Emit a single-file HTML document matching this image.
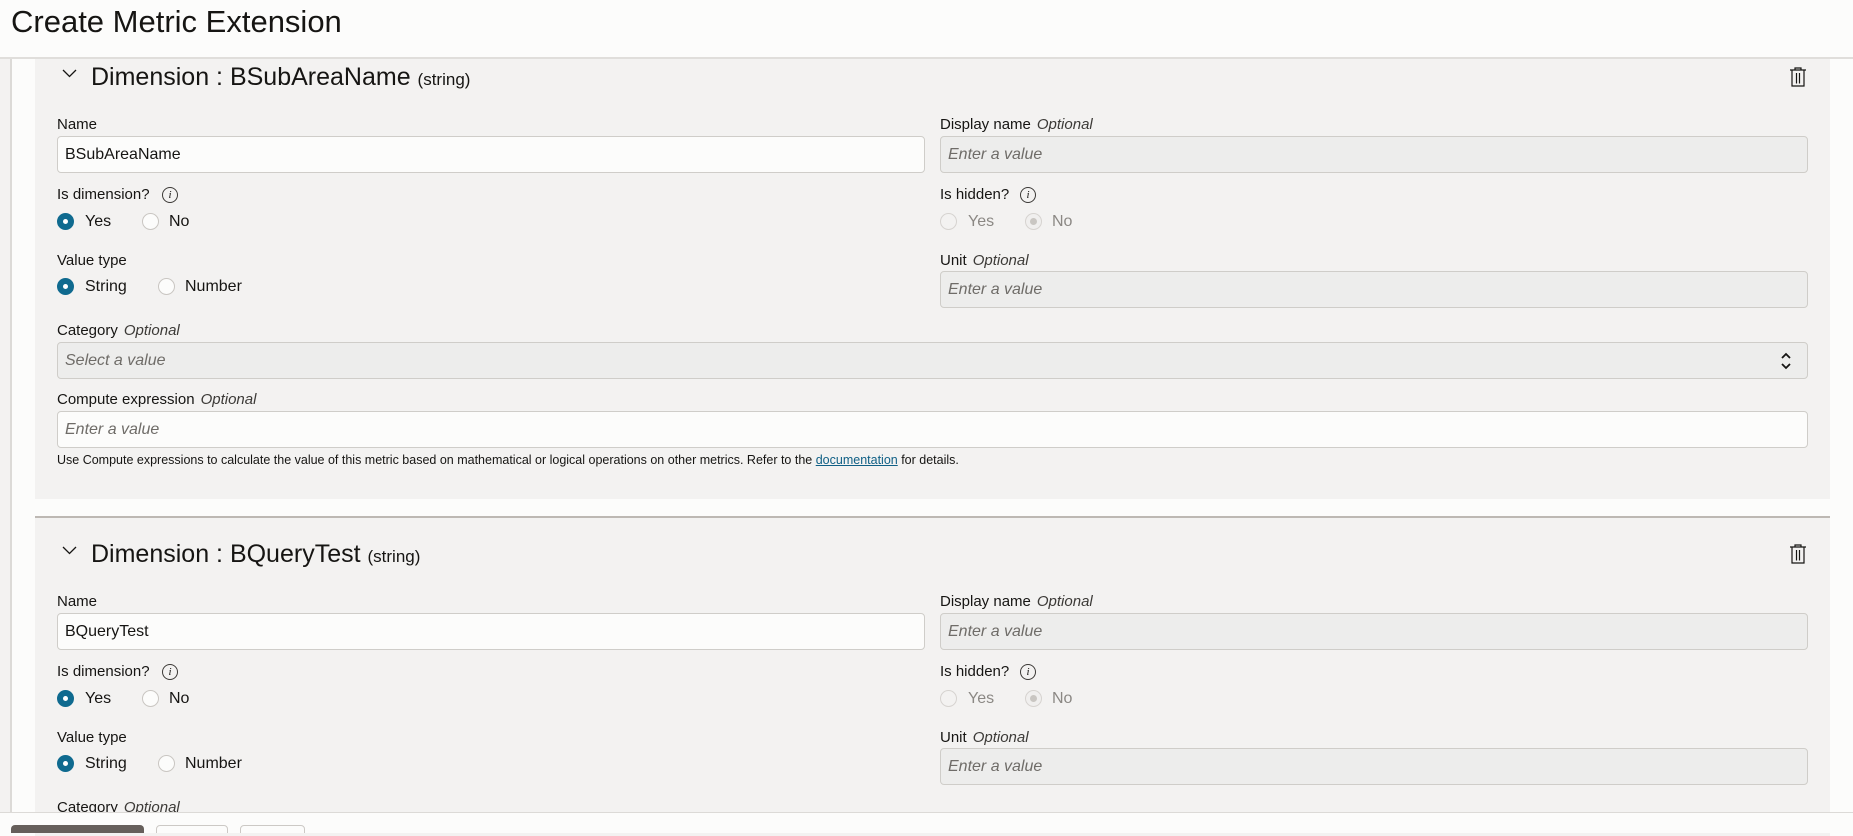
<!DOCTYPE html>
<html><head><meta charset="utf-8"><style>
*{box-sizing:border-box;margin:0;padding:0}
body{width:1853px;height:833px;overflow:hidden;background:#fcfcfb;font-family:"Liberation Sans",Arial,sans-serif;color:#161513;position:relative}
.abs{position:absolute}
#left{left:0;top:59px;width:12px;height:760px;background:#f3f2f1;border-right:2px solid #dcdad7}
.panel{position:absolute;left:35px;width:1795px;background:#f3f2f1}
.panel > *{position:absolute}
.lbl{font-size:15px;line-height:18px;white-space:nowrap}
.lbl i{color:#3c3a37;margin-left:6px}
.inp{height:37px;border:1px solid #cfcdc9;border-radius:4px;background:#fcfcfb;font-size:16px;line-height:35px;padding-left:7px;white-space:nowrap}
.dis{background:#ededec;color:#6f6c68}
.ph{font-style:italic;color:#6f6c68}
.r{width:17px;height:17px;border-radius:50%;border:1px solid #c9c6c2;background:#fcfcfb}
.r.on{background:#0f6a8f;border-color:#0f6a8f}
.r.on::after{content:"";position:absolute;left:5px;top:5px;width:5px;height:5px;border-radius:50%;background:#fff}
.r.de{background:#f3f2f1;border-color:#d6d3d0}
.r.dd{background:#f0efee;border-color:#d6d3d0}
.r.dd::after{content:"";position:absolute;left:4px;top:4px;width:7px;height:7px;border-radius:50%;background:#c9c6c2}
.rt{font-size:16px;line-height:18px}
.gray{color:#8b8884}
.info{width:16px;height:16px;border:1px solid #3c3a37;border-radius:50%;font:italic 11px/14px "Liberation Serif",serif;text-align:center}
.hdr{font-size:25px;line-height:30px;white-space:nowrap}
.hdr small{font-size:17px}
.help{font-size:12.5px;line-height:16px;color:#161513;white-space:nowrap}
.help u{color:#0f5f85}
</style></head><body>

<div class="abs" id="left"></div>

<div class="panel" style="top:39px;height:460px">
 <svg style="left:27px;top:30px" width="15" height="9" viewBox="0 0 15 9"><path d="M1 1l6.5 6.5L14 1" fill="none" stroke="#161513" stroke-width="1.3"/></svg>
 <div class="hdr" style="left:56px;top:23px">Dimension : BSubAreaName <small>(string)</small></div>
 <svg style="left:1754px;top:28px" width="18" height="20" viewBox="0 0 18 20"><path d="M6 2.5V1h6v1.5M1 3h16M3 3.5v15.5h12V3.5M7.5 6v10.5M10.5 6v10.5" fill="none" stroke="#161513" stroke-width="1.2"/></svg>
 <div class="lbl" style="left:22px;top:77px">Name</div>
 <div class="inp" style="left:22px;top:97px;width:868px">BSubAreaName</div>
 <div class="lbl" style="left:905px;top:77px">Display name<i>Optional</i></div>
 <div class="inp dis ph" style="left:905px;top:97px;width:868px">Enter a value</div>
 <div class="lbl" style="left:22px;top:147px">Is dimension?</div>
 <div class="info" style="left:127px;top:148px">i</div>
 <div class="r on" style="left:22px;top:174px"></div><div class="rt" style="left:50px;top:174px">Yes</div>
 <div class="r" style="left:107px;top:174px"></div><div class="rt" style="left:134px;top:174px">No</div>
 <div class="lbl" style="left:905px;top:147px">Is hidden?</div>
 <div class="info" style="left:985px;top:148px">i</div>
 <div class="r de" style="left:905px;top:174px"></div><div class="rt gray" style="left:933px;top:174px">Yes</div>
 <div class="r dd" style="left:990px;top:174px"></div><div class="rt gray" style="left:1017px;top:174px">No</div>
 <div class="lbl" style="left:22px;top:213px">Value type</div>
 <div class="r on" style="left:22px;top:239px"></div><div class="rt" style="left:50px;top:239px">String</div>
 <div class="r" style="left:123px;top:239px"></div><div class="rt" style="left:150px;top:239px">Number</div>
 <div class="lbl" style="left:905px;top:213px">Unit<i>Optional</i></div>
 <div class="inp dis ph" style="left:905px;top:232px;width:868px">Enter a value</div>
 <div class="lbl" style="left:22px;top:283px">Category<i>Optional</i></div>
 <div class="inp dis ph" style="left:22px;top:303px;width:1751px">Select a value</div>
 <svg style="left:1745px;top:313px" width="12" height="18" viewBox="0 0 12 18"><path d="M2 6l4-4 4 4M2 12l4 4 4-4" fill="none" stroke="#161513" stroke-width="1.8"/></svg>
 <div class="lbl" style="left:22px;top:352px">Compute expression<i>Optional</i></div>
 <div class="inp ph" style="left:22px;top:372px;width:1751px">Enter a value</div>
 <div class="help" style="left:22px;top:413px">Use Compute expressions to calculate the value of this metric based on mathematical or logical operations on other metrics. Refer to the <u>documentation</u> for details.</div>
</div>

<div class="panel" style="top:516px;height:320px;border-top:2px solid #bdb8b3">
 <svg style="left:27px;top:28px" width="15" height="9" viewBox="0 0 15 9"><path d="M1 1l6.5 6.5L14 1" fill="none" stroke="#161513" stroke-width="1.3"/></svg>
 <div class="hdr" style="left:56px;top:21px">Dimension : BQueryTest <small>(string)</small></div>
 <svg style="left:1754px;top:26px" width="18" height="20" viewBox="0 0 18 20"><path d="M6 2.5V1h6v1.5M1 3h16M3 3.5v15.5h12V3.5M7.5 6v10.5M10.5 6v10.5" fill="none" stroke="#161513" stroke-width="1.2"/></svg>
 <div class="lbl" style="left:22px;top:75px">Name</div>
 <div class="inp" style="left:22px;top:95px;width:868px">BQueryTest</div>
 <div class="lbl" style="left:905px;top:75px">Display name<i>Optional</i></div>
 <div class="inp dis ph" style="left:905px;top:95px;width:868px">Enter a value</div>
 <div class="lbl" style="left:22px;top:145px">Is dimension?</div>
 <div class="info" style="left:127px;top:146px">i</div>
 <div class="r on" style="left:22px;top:172px"></div><div class="rt" style="left:50px;top:172px">Yes</div>
 <div class="r" style="left:107px;top:172px"></div><div class="rt" style="left:134px;top:172px">No</div>
 <div class="lbl" style="left:905px;top:145px">Is hidden?</div>
 <div class="info" style="left:985px;top:146px">i</div>
 <div class="r de" style="left:905px;top:172px"></div><div class="rt gray" style="left:933px;top:172px">Yes</div>
 <div class="r dd" style="left:990px;top:172px"></div><div class="rt gray" style="left:1017px;top:172px">No</div>
 <div class="lbl" style="left:22px;top:211px">Value type</div>
 <div class="r on" style="left:22px;top:237px"></div><div class="rt" style="left:50px;top:237px">String</div>
 <div class="r" style="left:123px;top:237px"></div><div class="rt" style="left:150px;top:237px">Number</div>
 <div class="lbl" style="left:905px;top:211px">Unit<i>Optional</i></div>
 <div class="inp dis ph" style="left:905px;top:230px;width:868px">Enter a value</div>
 <div class="lbl" style="left:22px;top:281px">Category<i>Optional</i></div>
</div>

<div class="abs" style="left:0;top:0;width:1853px;height:59px;background:#fcfcfb;border-bottom:2px solid #e0dedb">
 <div class="abs" style="left:11px;top:4px;font-size:31px;line-height:36px;white-space:nowrap">Create Metric Extension</div>
</div>

<div class="abs" style="left:0;top:812px;width:1853px;height:21px;background:#fcfcfb;border-top:1px solid #dcdad7;overflow:hidden">
 <div class="abs" style="left:11px;top:12px;width:133px;height:20px;background:#665f5b;border-radius:4px"></div>
 <div class="abs" style="left:156px;top:12px;width:72px;height:20px;border:1px solid #ccc9c5;border-radius:4px;background:#fcfcfb"></div>
 <div class="abs" style="left:240px;top:12px;width:65px;height:20px;border:1px solid #ccc9c5;border-radius:4px;background:#fcfcfb"></div>
</div>
</body></html>
